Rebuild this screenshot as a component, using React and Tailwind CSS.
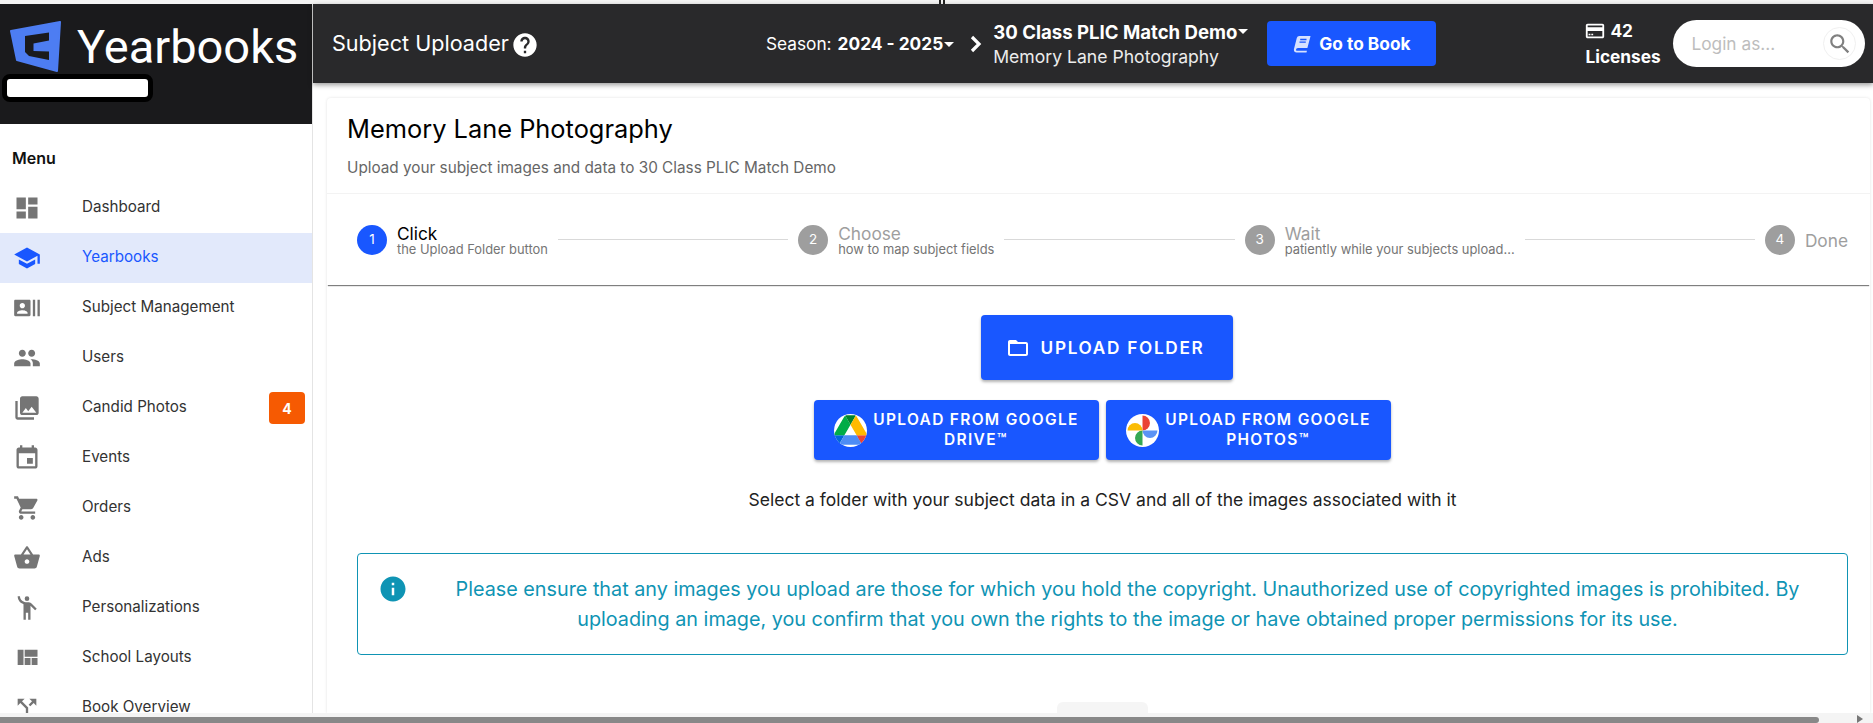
const Ic = ({ d, className, children }) => (
  <svg viewBox="0 0 24 24" className={className} fill="currentColor">
    {d ? <path d={d} /> : null}
    {children}
  </svg>
);

const P = {
  dashboard: "M3 13h8V3H3v10zm0 8h8v-6H3v6zm10 0h8V11h-8v10zm0-18v6h8V3h-8z",
  school: "M5 13.18v4L12 21l7-3.82v-4L12 17l-7-3.82zM12 3 1 9l11 6 9-4.91V17h2V9L12 3z",
  actors: "M21 5v14h2V5h-2zm-4 14h2V5h-2v14zM14 5H2c-.55 0-1 .45-1 1v12c0 .55.45 1 1 1h12c.55 0 1-.45 1-1V6c0-.55-.45-1-1-1zM8 7.75c1.24 0 2.25 1.01 2.25 2.25S9.24 12.25 8 12.25 5.75 11.24 5.75 10 6.76 7.75 8 7.75zM12.5 17h-9v-.75c0-1.5 3-2.25 4.5-2.25s4.5.75 4.5 2.25V17z",
  people: "M16 11c1.66 0 2.99-1.34 2.99-3S17.66 5 16 5c-1.66 0-3 1.34-3 3s1.34 3 3 3zm-8 0c1.66 0 2.99-1.34 2.99-3S9.66 5 8 5C6.34 5 5 6.34 5 8s1.34 3 3 3zm0 2c-2.33 0-7 1.17-7 3.5V19h14v-2.5c0-2.33-4.67-3.5-7-3.5zm8 0c-.29 0-.62.02-.97.05 1.16.84 1.97 1.97 1.97 3.45V19h6v-2.5c0-2.33-4.67-3.5-7-3.5z",
  photos: "M22 16V4c0-1.1-.9-2-2-2H8c-1.1 0-2 .9-2 2v12c0 1.1.9 2 2 2h12c1.1 0 2-.9 2-2zm-11-4 2.03 2.71L16 11l4 5H8l3-4zM2 6v14c0 1.1.9 2 2 2h14v-2H4V6H2z",
  event: "M17 12h-5v5h5v-5zM16 1v2H8V1H6v2H5c-1.11 0-1.99.9-1.99 2L3 19c0 1.1.89 2 2 2h14c1.1 0 2-.9 2-2V5c0-1.1-.9-2-2-2h-1V1h-2zm3 18H5V8h14v11z",
  cart: "M7 18c-1.1 0-1.99.9-1.99 2S5.9 22 7 22s2-.9 2-2-.9-2-2-2zM1 2v2h2l3.6 7.59-1.35 2.45c-.16.28-.25.61-.25.96 0 1.1.9 2 2 2h12v-2H7.42c-.14 0-.25-.11-.25-.25l.03-.12.9-1.63h7.45c.75 0 1.41-.41 1.75-1.03l3.58-6.49c.08-.14.12-.31.12-.48 0-.55-.45-1-1-1H5.21l-.94-2H1zm16 16c-1.1 0-1.99.9-1.99 2s.89 2 1.99 2 2-.9 2-2-.9-2-2-2z",
  basket: "M17.21 9l-4.38-6.56c-.19-.28-.51-.42-.83-.42-.32 0-.64.14-.83.43L6.79 9H2c-.55 0-1 .45-1 1 0 .09.01.18.04.27l2.54 9.27c.23.84 1 1.46 1.92 1.46h13c.92 0 1.69-.62 1.93-1.46l2.54-9.27L23 10c0-.55-.45-1-1-1h-4.79zM9 9l3-4.4L15 9H9zm3 8c-1.1 0-2-.9-2-2s.9-2 2-2 2 .9 2 2-.9 2-2 2z",
  person: "M12 2a2 2 0 1 0 0 4 2 2 0 0 0 0-4zM15.89 8.11C15.5 7.72 14.83 7 13.53 7h-2.54C8.24 6.99 6 4.75 6 2H4c0 3.16 2.11 5.84 5 6.71V22h2v-6h2v6h2V10.05L18.95 14l1.41-1.41-4.47-4.48z",
  quilt: "M10 18h5v-6h-5v6zm-6 0h5V5H4v13zm12 0h5v-6h-5v6zM10 5v6h11V5H10z",
  split: "M14 4l2.29 2.29-2.88 2.88 1.42 1.42 2.88-2.88L20 10V4zm-4 0H4v6l2.29-2.29 4.71 4.7V20h2v-8.41l-5.29-5.3z",
  card: "M20 4H4c-1.11 0-1.99.89-1.99 2L2 18c0 1.11.89 2 2 2h16c1.11 0 2-.89 2-2V6c0-1.11-.89-2-2-2zm0 14H4v-6h16v6zm0-10H4V6h16v2zM5 15h2v1.5H5zm3 0h2v1.5H8z",
  help: "M12 2C6.48 2 2 6.48 2 12s4.48 10 10 10 10-4.48 10-10S17.52 2 12 2zm1 17h-2v-2h2v2zm2.07-7.75-.9.92C13.45 12.9 13 13.5 13 15h-2v-.5c0-1.1.45-2.1 1.17-2.83l1.24-1.26c.37-.36.59-.86.59-1.41 0-1.1-.9-2-2-2s-2 .9-2 2H8c0-2.21 1.79-4 4-4s4 1.79 4 4c0 .88-.36 1.68-.93 2.25z",
  folder: "M20 6h-8l-2-2H4c-1.1 0-1.99.9-1.99 2L2 18c0 1.1.9 2 2 2h16c1.1 0 2-.9 2-2V8c0-1.1-.9-2-2-2zm0 12H4V8h16v10z",
  info: "M12 2C6.48 2 2 6.48 2 12s4.48 10 10 10 10-4.48 10-10S17.52 2 12 2zm1 15h-2v-6h2v6zm0-8h-2V7h2v2z",
  search: "M15.5 14h-.79l-.28-.27C15.41 12.59 16 11.11 16 9.5 16 5.91 13.09 3 9.5 3S3 5.91 3 9.5 5.91 16 9.5 16c1.61 0 3.09-.59 4.23-1.57l.27.28v.79l5 4.99L20.49 19l-4.99-5zm-6 0C7.01 14 5 11.99 5 9.5S7.01 5 9.5 5 14 7.01 14 9.5 11.99 14 9.5 14z",
};

const menu = [
  ["Dashboard", P.dashboard],
  ["Yearbooks", P.school, true],
  ["Subject Management", P.actors],
  ["Users", P.people],
  ["Candid Photos", P.photos, false, "4"],
  ["Events", P.event],
  ["Orders", P.cart],
  ["Ads", P.basket],
  ["Personalizations", P.person],
  ["School Layouts", P.quilt],
  ["Book Overview", P.split],
];

function Logo() {
  return (
    <svg viewBox="0 0 52 52" className="w-[52px] h-[52px] shrink-0">
      <path d="M1 10 L50 1 L47 50 L7 39 Z" fill="#4d7df2" stroke="#4d7df2" strokeWidth="2" strokeLinejoin="round" />
      <path d="M15 15 L39 11.5 V19.5 L23.5 22.5 V30 L39 30.5 V39 L19 35 L15 31 Z" fill="#1a1a1c" />
    </svg>
  );
}

function DriveIcon() {
  return (
    <span className="w-[33px] h-[33px] rounded-full bg-white overflow-hidden flex items-center justify-center shrink-0">
      <svg viewBox="0 0 87.3 78" className="w-[33px] h-[30px] shrink-0">
        <path d="m6.6 66.85 3.85 6.65c.8 1.4 1.95 2.5 3.3 3.3l13.75-23.8h-27.5c0 1.55.4 3.1 1.2 4.5z" fill="#0066da" />
        <path d="m43.65 25-13.75-23.8c-1.35.8-2.5 1.9-3.3 3.3l-25.4 44a9.06 9.06 0 0 0 -1.2 4.5h27.5z" fill="#00ac47" />
        <path d="m73.55 76.8c1.35-.8 2.5-1.9 3.3-3.3l1.6-2.75 7.65-13.25c.8-1.4 1.2-2.95 1.2-4.5h-27.502l5.852 11.5z" fill="#ea4335" />
        <path d="m43.65 25 13.75-23.8c-1.35-.8-2.9-1.2-4.5-1.2h-18.5c-1.6 0-3.15.45-4.5 1.2z" fill="#00832d" />
        <path d="m59.8 53h-32.3l-13.75 23.8c1.35.8 2.9 1.2 4.5 1.2h50.8c1.6 0 3.15-.45 4.5-1.2z" fill="#4d8cf5" />
        <path d="m73.4 26.5-12.7-22c-.8-1.4-1.95-2.5-3.3-3.3l-13.75 23.8 16.15 28h27.45c0-1.55-.4-3.1-1.2-4.5z" fill="#ffba00" />
      </svg>
    </span>
  );
}

function PhotosIcon() {
  return (
    <span className="w-[33px] h-[33px] rounded-full bg-white flex items-center justify-center shrink-0">
      <svg viewBox="0 0 32 32" className="w-[33px] h-[33px]">
        <path d="M16 16 V1.5 A7.25 7.25 0 0 1 16 16Z" fill="#ea4335" />
        <path d="M16 16 H30.5 A7.25 7.25 0 0 1 16 16Z" fill="#5b93f5" />
        <path d="M16 16 V30.5 A7.25 7.25 0 0 1 16 16Z" fill="#34a853" />
        <path d="M16 16 H1.5 A7.25 7.25 0 0 1 16 16Z" fill="#fbbc04" />
      </svg>
    </span>
  );
}

function BookIcon() {
  return (
    <svg viewBox="0 0 20 20" className="w-[18px] h-[18px]" fill="#d6e1ff">
      <path d="M7 1 H19.5 L16 14.5 H5.5 Q3.5 14.5 3.3 16.3 Q3.3 17.6 5 17.6 H15.5 L15 19.5 H4 Q1 19.5 1 16.5 Q1 15.8 1.3 14.8 L4.2 3.2 Q4.8 1 7 1Z" />
      <path d="M8 5 H15 M7.2 8 H14.2" stroke="#1957ff" strokeWidth="1.4" />
    </svg>
  );
}

function Step({ n, title, sub, active }) {
  return (
    <div className="flex items-center shrink-0">
      <span className={`w-[30px] h-[30px] rounded-full flex items-center justify-center text-[13.5px] text-white ${active ? "bg-[#1957ff]" : "bg-[#9e9e9e]"}`}>{n}</span>
      <div className="pl-[10px] pt-[2px] flex flex-col">
        <span className={`text-[17.3px] leading-[18px] ${active ? "text-black" : "text-[#9e9e9e]"}`}>{title}</span>
        {sub ? <span className="text-[12.9px] leading-[13px] text-[#757575]">{sub}</span> : null}
      </div>
    </div>
  );
}

const Line = () => <div className="flex-1 h-px bg-[#d9d9d9] mx-[10px]" />;

export default function App() {
  return (
    <div className="relative w-[1873px] h-[723px] overflow-hidden bg-white flex flex-col text-[#212121]" style={{ fontFamily: "Inter, 'Noto Sans', sans-serif" }}>
      <div className="h-[4px] bg-[#f4f4f4] shrink-0" />
      <div className="absolute left-[939px] top-0 w-[6px] h-[4px] border-x-2 border-[#222]" />
      <div className="flex flex-1 min-h-0">
        <aside className="w-[313px] shrink-0 border-r border-[#e4e4e4] flex flex-col overflow-hidden">
          <div className="h-[120px] shrink-0 bg-[#1a1a1c] relative">
            <div className="flex items-start pl-[10px] pt-[17px] gap-[15px]">
              <Logo />
              <span className="text-white text-[47px] leading-[52px]" style={{ fontFamily: "Roboto, sans-serif", fontWeight: 400 }}>Yearbooks</span>
            </div>
            <div className="absolute left-[2px] top-[70px] w-[151px] h-[28px] bg-white border-[5px] border-black rounded-[8px]" />
          </div>
          <div className="pl-[12px] pt-[22px] pb-[13px] text-[16px] leading-[24px] font-semibold text-[#111]">Menu</div>
          <nav className="flex flex-col">
            {menu.map(([label, d, active, badge]) => (
              <div key={label} className={`h-[50px] shrink-0 flex items-center pl-[13px] pr-[7px] ${active ? "bg-[#e2e9fb] text-[#1957ff]" : "text-[#333]"}`}>
                <Ic d={d} className={`w-[28px] h-[28px] shrink-0 ${active ? "text-[#1957ff]" : "text-[#757575]"}`} />
                <span className="ml-[41px] mb-[2px] flex-1 text-[15.2px]">{label}</span>
                {badge ? <span className="w-[36px] h-[32px] rounded-[4px] bg-[#f65a02] text-white font-bold text-[14px] flex items-center justify-center">{badge}</span> : null}
              </div>
            ))}
          </nav>
        </aside>
        <div className="flex-1 min-w-0 flex flex-col">
          <header className="h-[79px] shrink-0 bg-[#29292b] text-white flex items-center shadow-[0_2px_5px_rgba(0,0,0,0.4)] z-10">
            <span className="ml-[19px] text-[21.6px]">Subject Uploader</span>
            <Ic d={P.help} className="ml-[2px] mt-[3px] w-[28px] h-[28px]" />
            <div className="ml-[227px] flex items-center text-[17.3px]">
              <span>Season:</span>
              <span className="ml-[6px] font-bold">2024 - 2025</span>
              <span className="ml-[1px] mt-[2px] w-0 h-0 border-x-[5px] border-x-transparent border-t-[5px] border-t-white" />
            </div>
            <svg viewBox="0 0 14 20" className="ml-[15px] w-[14px] h-[20px]" fill="none" stroke="white" strokeWidth="3.2"><path d="M3 3l7 7-7 7" /></svg>
            <div className="ml-[10px] flex flex-col">
              <div className="flex items-center">
                <span className="text-[18.6px] leading-[26px] font-bold">30 Class PLIC Match Demo</span>
                <span className="ml-[1px] w-0 h-0 border-x-[5px] border-x-transparent border-t-[5px] border-t-white" />
              </div>
              <span className="text-[17.6px] leading-[24px] text-[#ececec]">Memory Lane Photography</span>
            </div>
            <button className="ml-[19px] w-[169px] h-[45px] rounded-[4px] bg-[#1957ff] text-white flex items-center justify-center gap-[8px] font-bold text-[17.3px]">
              <BookIcon />
              Go to Book
            </button>
            <div className="ml-[149px] w-[77px] flex flex-col font-bold text-[17.3px] leading-[26px] shrink-0">
              <div className="flex items-center gap-[4px]">
                <Ic d={P.card} className="w-[22px] h-[22px] -ml-[1px]" />
                <span>42</span>
              </div>
              <span>Licenses</span>
            </div>
            <div className="ml-[11px] w-[192px] h-[47px] rounded-full bg-white flex items-center pl-[18px] pr-[9px]">
              <span className="flex-1 text-[#bdbdbd] text-[17.3px]">Login as...</span>
              <span className="w-[33px] h-[33px] rounded-full border border-[#f0f0f0] flex items-center justify-center">
                <Ic d={P.search} className="w-[26px] h-[26px] text-[#808080]" />
              </span>
            </div>
          </header>
          <main className="relative flex-1 min-h-0 pl-[14px] pr-[3px] pt-[15px] overflow-hidden">
            <section className="h-full rounded-t-[4px] shadow-[0_0_3px_rgba(0,0,0,0.12)] flex flex-col">
              <div className="h-[96px] shrink-0 pl-[20px] pt-[13px] border-b border-[#f3f3f3]">
                <h1 className="text-[25.4px] leading-[36px] text-black">Memory Lane Photography</h1>
                <p className="mt-[11px] text-[15.3px] leading-[20px] text-[#666]">Upload your subject images and data to 30 Class PLIC Match Demo</p>
              </div>
              <div className="h-[91px] shrink-0 flex items-center pl-[30px] pr-[22px] shadow-[0_2px_1px_-1px_rgba(0,0,0,0.5)]">
                <Step n="1" title="Click" sub="the Upload Folder button" active />
                <Line />
                <Step n="2" title="Choose" sub="how to map subject fields" />
                <Line />
                <Step n="3" title="Wait" sub="patiently while your subjects upload..." />
                <Line />
                <Step n="4" title="Done" />
              </div>
              <div className="flex flex-col items-center pt-[30px] pl-[30px] pr-[22px]">
                <button className="ml-[9px] w-[252px] h-[65px] rounded-[4px] bg-[#1957ff] text-white flex items-center justify-center gap-[11px] pr-[4px] font-semibold text-[17.2px] tracking-[1.7px] shadow-[0_2px_3px_rgba(0,0,0,0.3)]">
                  <Ic d={P.folder} className="w-[24px] h-[24px]" />
                  UPLOAD FOLDER
                </button>
                <div className="mt-[20px] flex gap-[7px]">
                  {[
                    ["UPLOAD FROM GOOGLE", "DRIVE™", <DriveIcon key="d" />],
                    ["UPLOAD FROM GOOGLE", "PHOTOS™", <PhotosIcon key="p" />],
                  ].map(([a, b, icon]) => (
                    <button key={b} className="w-[285px] h-[60px] rounded-[4px] bg-[#1957ff] text-white flex items-center pl-[20px] pr-[14px] font-semibold text-[15.5px] leading-[20px] tracking-[1.3px] shadow-[0_2px_3px_rgba(0,0,0,0.3)]">
                      {icon}
                      <span className="flex-1 text-center">{a}<br />{b}</span>
                    </button>
                  ))}
                </div>
                <p className="mt-[28px] text-[17.5px] leading-[24px] text-[#222]">Select a folder with your subject data in a CSV and all of the images associated with it</p>
              </div>
              <div className="mt-[41px] ml-[30px] mr-[22px] h-[102px] shrink-0 rounded-[4px] border border-[#0f94b4] flex text-[#0f94b4]">
                <Ic d={P.info} className="ml-[20px] mt-[20px] w-[30px] h-[30px] shrink-0" />
                <p className="flex-1 px-[20px] pt-[20px] text-center text-[19.8px] leading-[30px]">Please ensure that any images you upload are those for which you hold the copyright. Unauthorized use of copyrighted images is prohibited. By uploading an image, you confirm that you own the rights to the image or have obtained proper permissions for its use.</p>
              </div>
            </section>
            <div className="absolute left-[744px] bottom-0 w-[91px] h-[11px] rounded-t-[6px] bg-[#f5f5f5]" />
          </main>
        </div>
      </div>
      <div className="h-[10px] shrink-0 bg-[#f4f4f4] flex items-end">
        <div className="w-[1819px] h-[6px] rounded-r-[3px] bg-[#888]" />
        <span className="ml-[38px] mb-0 w-0 h-0 border-y-[4px] border-y-transparent border-l-[6px] border-l-[#777]" />
      </div>
    </div>
  );
}
